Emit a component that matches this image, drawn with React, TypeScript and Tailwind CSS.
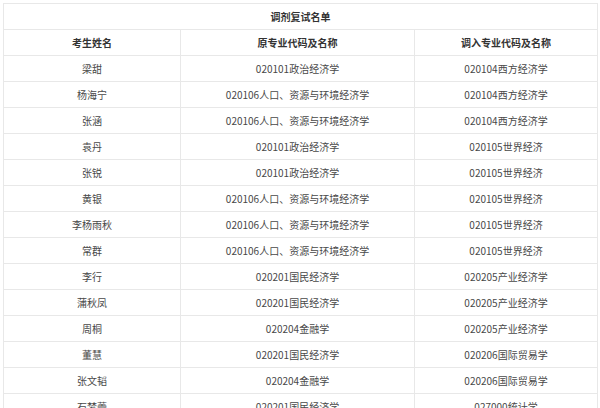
const rows: [string, string, string][] = [
  ['梁甜', '020101政治经济学', '020104西方经济学'],
  ['杨海宁', '020106人口、资源与环境经济学', '020104西方经济学'],
  ['张涵', '020106人口、资源与环境经济学', '020104西方经济学'],
  ['袁丹', '020101政治经济学', '020105世界经济'],
  ['张锐', '020101政治经济学', '020105世界经济'],
  ['黄银', '020106人口、资源与环境经济学', '020105世界经济'],
  ['李杨雨秋', '020106人口、资源与环境经济学', '020105世界经济'],
  ['常群', '020106人口、资源与环境经济学', '020105世界经济'],
  ['李行', '020201国民经济学', '020205产业经济学'],
  ['蒲秋凤', '020201国民经济学', '020205产业经济学'],
  ['周桐', '020204金融学', '020205产业经济学'],
  ['董慧', '020201国民经济学', '020206国际贸易学'],
  ['张文韬', '020204金融学', '020206国际贸易学'],
  ['石梦蕾', '020201国民经济学', '027000统计学'],
];

export default function App() {
  const cell = 'h-[26px] border border-[#e8e8e8] p-0 text-center align-middle';
  return (
    <div className="h-[408px] w-[600px] overflow-hidden bg-white pl-[3px] pt-[3px] font-['Noto_Sans_CJK_SC',sans-serif] text-[10px] text-[#484848]">
      <table className="w-[594px] table-fixed border-collapse">
        <colgroup>
          <col className="w-[177px]" />
          <col className="w-[234px]" />
          <col className="w-[183px]" />
        </colgroup>
        <thead>
          <tr>
            <th colSpan={3} className={`${cell} font-bold text-[#333]`}>调剂复试名单</th>
          </tr>
          <tr>
            <th className={`${cell} font-bold text-[#333]`}>考生姓名</th>
            <th className={`${cell} font-bold text-[#333]`}>原专业代码及名称</th>
            <th className={`${cell} font-bold text-[#333]`}>调入专业代码及名称</th>
          </tr>
        </thead>
        <tbody>
          {rows.map(([name, from, to]) => (
            <tr key={name}>
              <td className={cell}>{name}</td>
              <td className={cell}>{from}</td>
              <td className={cell}>{to}</td>
            </tr>
          ))}
        </tbody>
      </table>
    </div>
  );
}
